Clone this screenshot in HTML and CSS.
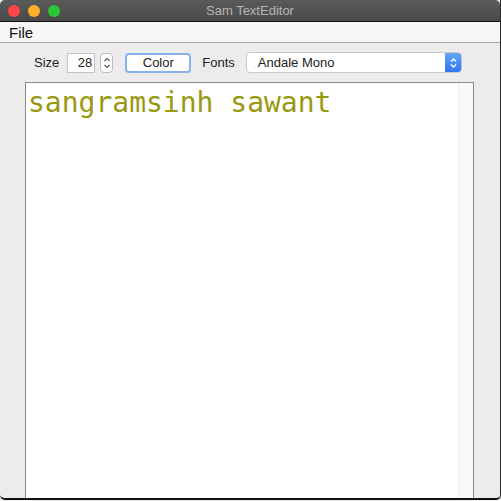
FILE: index.html
```html
<!DOCTYPE html>
<html>
<head>
<meta charset="utf-8">
<link rel="stylesheet" href="styles.css">
</head>
<body>
<div class="window">
  <div class="titlebar">
    <div class="lights">
      <span class="light red"></span>
      <span class="light yellow"></span>
      <span class="light green"></span>
    </div>
    <div class="title">Sam TextEditor</div>
  </div>
  <div class="menubar"><span class="menu">File</span></div>
  <div class="toolbar">
    <span class="label">Size</span>
    <span class="field">28</span>
    <span class="spinner">
      <svg width="8" height="16" viewBox="0 0 8 16"><path d="M1.5 6 L4 3.5 L6.5 6 M1.5 10 L4 12.5 L6.5 10" fill="none" stroke="#555" stroke-width="1.1"/></svg>
    </span>
    <span class="button">Color</span>
    <span class="label fonts">Fonts</span>
    <span class="select">
      <span class="select-text">Andale Mono</span>
      <span class="select-arrow">
        <svg width="9" height="14" viewBox="0 0 9 14"><path d="M2 5.5 L4.5 3 L7 5.5 M2 8.5 L4.5 11 L7 8.5" fill="none" stroke="#fff" stroke-width="1.4"/></svg>
      </span>
    </span>
  </div>
  <div class="editor">
    <div class="text">sangramsinh sawant</div>
    <div class="scroll"></div>
  </div>
</div>
</body>
</html>
```

FILE: styles.css
```css
* { box-sizing: border-box; }
html, body { margin: 0; padding: 0; background: #ececec; }
body { width: 501px; height: 501px; overflow: hidden; font-family: "Open Sans", "Liberation Sans", sans-serif; }
.window {
  width: 501px; height: 500px;
  background: #ececec;
  border-right: 1px solid #2a2a2a;
  border-bottom: 2px solid #111;
  border-radius: 0 0 5px 5px;
  display: flex; flex-direction: column;
  overflow: hidden;
}
.titlebar {
  height: 22px; flex: none;
  background: linear-gradient(#5a5a5a, #4a4a4a);
  border-bottom: 1px solid #111;
  display: flex; align-items: center;
  position: relative;
  border-radius: 5px 5px 0 0;
}
.lights { display: flex; gap: 8px; padding-left: 8px; }
.light { width: 12px; height: 12px; border-radius: 50%; display: block; }
.red { background: #fc4548; }
.yellow { background: #fdb225; }
.green { background: #2ac636; }
.title {
  position: absolute; left: 0; right: 0; top: 0; bottom: 0;
  text-align: center; line-height: 21px;
  color: #b6b6b6; font-size: 13px;
  font-family: "Liberation Sans", sans-serif;
}
.menubar {
  height: 21px; flex: none;
  background: #f7f7f7;
  border-bottom: 1px solid #a8a8a8;
  padding-left: 9px;
  display: flex; align-items: center;
}
.menu { font-size: 15px; color: #111; font-family: "Liberation Sans", sans-serif; }
.toolbar {
  height: 39px; flex: none;
  display: flex; align-items: center;
  padding-left: 34px;
  font-size: 13px; color: #222;
  font-family: "Liberation Sans", sans-serif;
}
.label { margin-right: 8px; }
.fonts { margin-left: 0; margin-right: 11px; }
.field {
  width: 28px; height: 20px;
  background: #fff; border: 1px solid #c4c4c4;
  text-align: right; padding-right: 2px; line-height: 18px;
  margin-left: 0;
}
.spinner {
  width: 13px; height: 20px; margin-left: 5px;
  background: #fff; border: 1px solid #bdbdbd; border-radius: 4px;
  display: flex; align-items: center; justify-content: center;
}
.button {
  width: 66px; height: 20px; margin-left: 12px;
  background: #fff; border: 2px solid #86b2ec; border-radius: 4px;
  display: flex; align-items: center; justify-content: center;
  margin-right: 11px;
}
.select {
  width: 216px; height: 21px;
  background: #fff; border: 1px solid #c8c8c8; border-radius: 4px;
  display: flex; align-items: center; justify-content: space-between;
  overflow: hidden;
}
.select-text { padding-left: 11px; }
.select-arrow {
  width: 17px; height: 21px; margin-right: -1px;
  background: linear-gradient(#68a8fa, #2c72ef);
  display: flex; align-items: center; justify-content: center;
  border-radius: 0 4px 4px 0;
}
.editor {
  flex: 1;
  margin-left: 25px; width: 449px;
  background: #fff;
  border: 1px solid #8a8a8a;
  border-bottom: none;
  display: flex;
}
.text {
  flex: 1;
  font-family: "DejaVu Sans Mono", monospace;
  font-size: 28px;
  color: #999910;
  padding: 4px 0 0 2px;
  line-height: 1.164;
}
.scroll {
  width: 15px; flex: none;
  background: #f8f8f8;
  border-left: 1px solid #ececec;
}
```
